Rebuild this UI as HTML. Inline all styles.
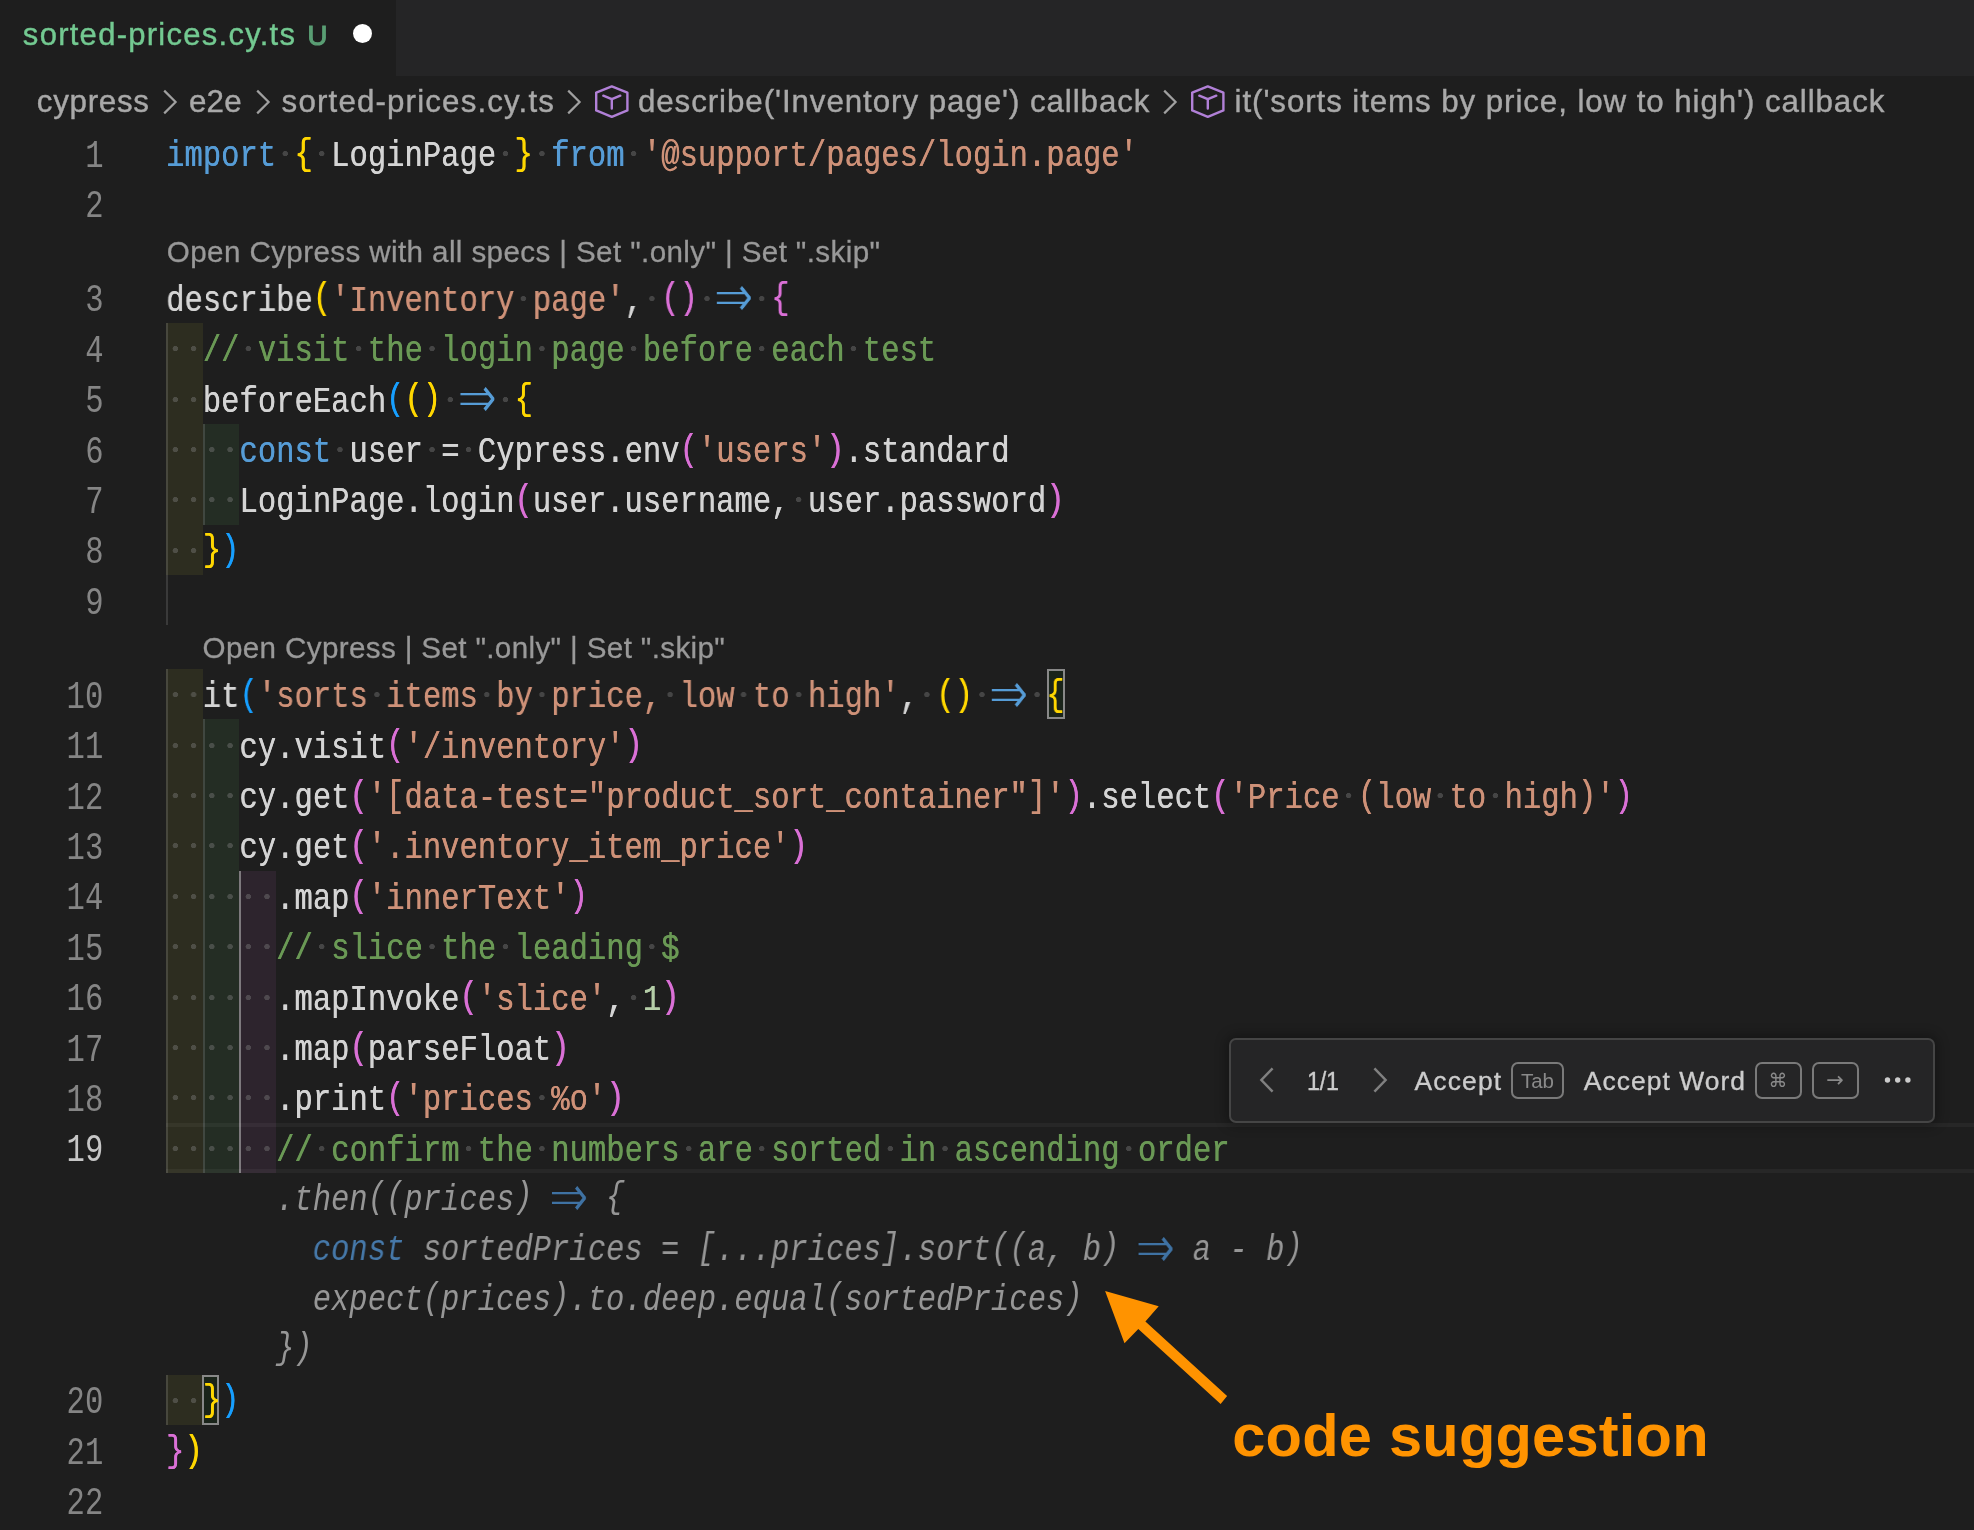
<!DOCTYPE html>
<html lang="en">
<head>
<meta charset="utf-8">
<title>sorted-prices.cy.ts</title>
<style>
html,body{margin:0;padding:0;}
body{width:1974px;height:1530px;background:#1e1e1e;position:relative;overflow:hidden;font-family:"Liberation Sans",sans-serif;color:#d4d4d4;}
#root{position:absolute;left:0;top:0;width:1974px;height:1530px;overflow:hidden;will-change:transform;}
.abs{position:absolute;}
.tabbar{position:absolute;left:0;top:0;width:1974px;height:76px;background:#252526;}
.tab{position:absolute;left:0;top:0;width:396px;height:76px;background:#1e1e1e;}
.tab .name{position:absolute;top:0;line-height:70px;font-size:31px;color:#73c991;white-space:pre;-webkit-text-stroke:0.4px #73c991;}
.tab .u{position:absolute;left:307.6px;top:0;line-height:71.6px;font-size:27.6px;color:#5a9e74;white-space:pre;-webkit-text-stroke:1.1px #5a9e74;}
.tab .dot{position:absolute;left:352.6px;top:24.2px;width:19.2px;height:19.2px;border-radius:50%;background:#ffffff;}
.bc{position:absolute;top:76px;height:52px;line-height:52px;font-size:31.3px;color:#a9a9a9;white-space:pre;-webkit-text-stroke:0.4px #a9a9a9;}
.chev{position:absolute;}
.ln{position:absolute;left:0;width:103.6px;text-align:right;height:50.4px;color:#858585;}
.ln.act{color:#c6c6c6;}
.code{position:absolute;left:166.0px;height:50.4px;white-space:pre;}
.mono{display:inline-block;font-family:"Liberation Mono","DejaVu Sans Mono",monospace;font-size:36.0px;line-height:50.4px;transform:scaleX(0.84863);transform-origin:0 0;white-space:pre;position:relative;top:4.12px;text-shadow:0.4px 0 0 currentColor;}
.ln .mono{transform-origin:100% 0;font-size:39.4px;transform:scaleX(0.77539);top:3.72px;text-shadow:none;}
.k{color:#569cd6;} .s{color:#ce9178;} .c{color:#6a9955;} .n{color:#b5cea8;} .f{color:#d4d4d4;}
.b1{color:#ffd700;} .b2{color:#da70d6;} .b3{color:#179fff;}
.ar{display:inline-block;width:43.21px;height:1px;position:relative;vertical-align:baseline;}
.ar b{position:absolute;left:-2.2px;top:-39.6px;width:100%;text-align:center;font:normal 400 54px/54px "DejaVu Sans",sans-serif;color:#569cd6;transform:scale(1.04,1.12);-webkit-text-stroke:1.1px #1e1e1e;text-shadow:none;}
.ga b{color:#3f72a3;margin-top:1.3px;}
i.w{font-style:normal;background:radial-gradient(ellipse 3.6px 2.9px at 50% calc(50% - 2.9px), rgba(140,140,140,0.36) 0, rgba(140,140,140,0.36) 80%, rgba(140,140,140,0) 100%);}
.bmbox{position:absolute;box-sizing:border-box;border:2px solid #888888;background:rgba(0,100,0,0.1);}
.b1,.b2,.b3,.p{position:relative;top:-2.4px;}
.gh .mono{margin-top:-1.5px;text-shadow:none;}
.g{color:#969696;font-style:italic;} .gk{color:#4678a8;font-style:italic;} .ga{color:#4678a8;}
.lens{position:absolute;font-size:29.6px;color:#999999;-webkit-text-stroke:0.3px #999999;white-space:pre;height:43.6px;line-height:43.6px;}
.rb{position:absolute;height:50.4px;}
.guide{position:absolute;width:2px;}
.tb{position:absolute;left:1229px;top:1038px;width:706px;height:85px;box-sizing:border-box;border:2px solid #454545;border-radius:7px;background:#252526;box-shadow:0 0 12px 3px rgba(0,0,0,0.30);}
.tb .t{position:absolute;top:0;height:81px;line-height:82px;font-size:26.4px;color:#cccccc;white-space:pre;-webkit-text-stroke:0.35px #cccccc;}
.key{position:absolute;top:22px;height:37px;box-sizing:border-box;border:2px solid #7a7a7a;border-radius:7px;color:#8a8a8a;text-align:center;white-space:pre;}
.ann{position:absolute;top:1401.2px;font-weight:bold;font-size:59.6px;line-height:70px;color:#ff9300;white-space:pre;}
</style>
</head>
<body>
<div id="root">
<div class="tabbar"><div class="tab"><span class="name" style="left:22.86px;letter-spacing:1.270px">sorted-prices.cy.ts</span><span class="u">U</span><span class="dot"></span></div></div>
<div class="bc" id="bc0" style="left:36.86px;letter-spacing:0.720px">cypress</div>
<div class="bc" id="bc1" style="left:188.90px;letter-spacing:0.270px">e2e</div>
<div class="bc" id="bc2" style="left:281.62px;letter-spacing:1.150px">sorted-prices.cy.ts</div>
<div class="bc" id="bc3" style="left:637.90px;letter-spacing:0.932px">describe('Inventory page') callback</div>
<div class="bc" id="bc4" style="left:1234.62px;letter-spacing:0.915px">it('sorts items by price, low to high') callback</div>
<svg class="chev" style="left:160.0px;top:86px" width="22" height="32" viewBox="0 0 22 32"><path d="M4.2 4.6 L15.6 16 L4.2 27.4" fill="none" stroke="#a0a0a0" stroke-width="2.2" stroke-linejoin="miter"/></svg>
<svg class="chev" style="left:253.0px;top:86px" width="22" height="32" viewBox="0 0 22 32"><path d="M4.2 4.6 L15.6 16 L4.2 27.4" fill="none" stroke="#a0a0a0" stroke-width="2.2" stroke-linejoin="miter"/></svg>
<svg class="chev" style="left:564px;top:86px" width="22" height="32" viewBox="0 0 22 32"><path d="M4.2 4.6 L15.6 16 L4.2 27.4" fill="none" stroke="#a0a0a0" stroke-width="2.2" stroke-linejoin="miter"/></svg>
<svg class="chev" style="left:1159.5px;top:86px" width="22" height="32" viewBox="0 0 22 32"><path d="M4.2 4.6 L15.6 16 L4.2 27.4" fill="none" stroke="#a0a0a0" stroke-width="2.2" stroke-linejoin="miter"/></svg>
<svg class="chev" style="left:592px;top:82px" width="40" height="40" viewBox="0 0 40 40"><path d="M19.8 4.4 L35.4 10.6 L35.4 28.4 L19.8 34.8 L4.2 28.4 L4.2 10.6 Z" fill="none" stroke="#b180d7" stroke-width="2.4" stroke-linejoin="round"/><path d="M11.3 13.7 L19.8 17.2 L28.3 13.7 M19.8 17.2 L19.8 26.6" fill="none" stroke="#b180d7" stroke-width="2.4" stroke-linecap="round"/></svg>
<svg class="chev" style="left:1187.5px;top:82px" width="40" height="40" viewBox="0 0 40 40"><path d="M19.8 4.4 L35.4 10.6 L35.4 28.4 L19.8 34.8 L4.2 28.4 L4.2 10.6 Z" fill="none" stroke="#b180d7" stroke-width="2.4" stroke-linejoin="round"/><path d="M11.3 13.7 L19.8 17.2 L28.3 13.7 M19.8 17.2 L19.8 26.6" fill="none" stroke="#b180d7" stroke-width="2.4" stroke-linecap="round"/></svg>
<div class="rb" style="left:166.0px;top:323.0px;width:36.7px;background:rgba(255,255,64,0.07)"></div><div class="rb" style="left:166.0px;top:373.4px;width:36.7px;background:rgba(255,255,64,0.07)"></div><div class="rb" style="left:166.0px;top:423.8px;width:36.7px;background:rgba(255,255,64,0.07)"></div><div class="rb" style="left:202.7px;top:423.8px;width:36.7px;background:rgba(127,255,127,0.07)"></div><div class="rb" style="left:166.0px;top:474.2px;width:36.7px;background:rgba(255,255,64,0.07)"></div><div class="rb" style="left:202.7px;top:474.2px;width:36.7px;background:rgba(127,255,127,0.07)"></div><div class="rb" style="left:166.0px;top:524.6px;width:36.7px;background:rgba(255,255,64,0.07)"></div><div class="rb" style="left:166.0px;top:669.0px;width:36.7px;background:rgba(255,255,64,0.07)"></div><div class="rb" style="left:166.0px;top:719.4px;width:36.7px;background:rgba(255,255,64,0.07)"></div><div class="rb" style="left:202.7px;top:719.4px;width:36.7px;background:rgba(127,255,127,0.07)"></div><div class="rb" style="left:166.0px;top:769.8px;width:36.7px;background:rgba(255,255,64,0.07)"></div><div class="rb" style="left:202.7px;top:769.8px;width:36.7px;background:rgba(127,255,127,0.07)"></div><div class="rb" style="left:166.0px;top:820.2px;width:36.7px;background:rgba(255,255,64,0.07)"></div><div class="rb" style="left:202.7px;top:820.2px;width:36.7px;background:rgba(127,255,127,0.07)"></div><div class="rb" style="left:166.0px;top:870.6px;width:36.7px;background:rgba(255,255,64,0.07)"></div><div class="rb" style="left:202.7px;top:870.6px;width:36.7px;background:rgba(127,255,127,0.07)"></div><div class="rb" style="left:239.3px;top:870.6px;width:36.7px;background:rgba(255,127,255,0.07)"></div><div class="rb" style="left:166.0px;top:921.0px;width:36.7px;background:rgba(255,255,64,0.07)"></div><div class="rb" style="left:202.7px;top:921.0px;width:36.7px;background:rgba(127,255,127,0.07)"></div><div class="rb" style="left:239.3px;top:921.0px;width:36.7px;background:rgba(255,127,255,0.07)"></div><div class="rb" style="left:166.0px;top:971.4px;width:36.7px;background:rgba(255,255,64,0.07)"></div><div class="rb" style="left:202.7px;top:971.4px;width:36.7px;background:rgba(127,255,127,0.07)"></div><div class="rb" style="left:239.3px;top:971.4px;width:36.7px;background:rgba(255,127,255,0.07)"></div><div class="rb" style="left:166.0px;top:1021.8px;width:36.7px;background:rgba(255,255,64,0.07)"></div><div class="rb" style="left:202.7px;top:1021.8px;width:36.7px;background:rgba(127,255,127,0.07)"></div><div class="rb" style="left:239.3px;top:1021.8px;width:36.7px;background:rgba(255,127,255,0.07)"></div><div class="rb" style="left:166.0px;top:1072.2px;width:36.7px;background:rgba(255,255,64,0.07)"></div><div class="rb" style="left:202.7px;top:1072.2px;width:36.7px;background:rgba(127,255,127,0.07)"></div><div class="rb" style="left:239.3px;top:1072.2px;width:36.7px;background:rgba(255,127,255,0.07)"></div><div class="rb" style="left:166.0px;top:1122.6px;width:36.7px;background:rgba(255,255,64,0.07)"></div><div class="rb" style="left:202.7px;top:1122.6px;width:36.7px;background:rgba(127,255,127,0.07)"></div><div class="rb" style="left:239.3px;top:1122.6px;width:36.7px;background:rgba(255,127,255,0.07)"></div><div class="rb" style="left:166.0px;top:1374.6px;width:36.7px;background:rgba(255,255,64,0.07)"></div>
<div class="guide" style="left:166.0px;top:323.0px;height:302.4px;background:rgba(200,200,200,0.17)"></div><div class="guide" style="left:166.0px;top:669.0px;height:504.0px;background:rgba(200,200,200,0.17)"></div><div class="guide" style="left:166.0px;top:1374.6px;height:50.4px;background:rgba(200,200,200,0.17)"></div><div class="guide" style="left:202.7px;top:423.8px;height:100.8px;background:rgba(200,200,200,0.17)"></div><div class="guide" style="left:202.7px;top:719.4px;height:453.6px;background:rgba(200,200,200,0.17)"></div><div class="guide" style="left:239.3px;top:870.6px;height:302.4px;background:rgba(200,200,200,0.52)"></div>
<div class="bmbox" style="left:1047.0px;top:669.0px;width:17.5px;height:50.4px"></div><div class="bmbox" style="left:201.9px;top:1374.6px;width:17.5px;height:50.4px"></div>
<div class="abs" style="left:166.0px;top:1123.0px;width:1808.0px;height:49.8px;box-sizing:border-box;border-top:4px solid rgba(255,255,255,0.045);border-bottom:4px solid rgba(255,255,255,0.045);"></div>
<div class="ln" style="top:128.2px"><span class="mono">1</span></div><div class="code" style="top:128.2px"><span class="mono"><span class="k">import</span><i class="w"> </i><span class="b1">{</span><i class="w"> </i><span class="f">LoginPage</span><i class="w"> </i><span class="b1">}</span><i class="w"> </i><span class="k">from</span><i class="w"> </i><span class="s">'@support/pages/login.page'</span></span></div>
<div class="ln" style="top:178.6px"><span class="mono">2</span></div>
<div class="lens" style="left:166.86px;letter-spacing:0.387px;top:229.6px">Open Cypress with all specs | Set ".only" | Set ".skip"</div>
<div class="ln" style="top:272.6px"><span class="mono">3</span></div><div class="code" style="top:272.6px"><span class="mono"><span class="f">describe</span><span class="b1">(</span><span class="s">'Inventory<i class="w"> </i>page'</span><span class="f">,</span><i class="w"> </i><span class="b2">()</span><i class="w"> </i><span class="ar a"><b>⇒</b></span><i class="w"> </i><span class="b2">{</span></span></div>
<div class="ln" style="top:323.0px"><span class="mono">4</span></div><div class="code" style="top:323.0px"><span class="mono"><i class="w"> </i><i class="w"> </i><span class="c">//<i class="w"> </i>visit<i class="w"> </i>the<i class="w"> </i>login<i class="w"> </i>page<i class="w"> </i>before<i class="w"> </i>each<i class="w"> </i>test</span></span></div>
<div class="ln" style="top:373.4px"><span class="mono">5</span></div><div class="code" style="top:373.4px"><span class="mono"><i class="w"> </i><i class="w"> </i><span class="f">beforeEach</span><span class="b3">(</span><span class="b1">()</span><i class="w"> </i><span class="ar a"><b>⇒</b></span><i class="w"> </i><span class="b1">{</span></span></div>
<div class="ln" style="top:423.8px"><span class="mono">6</span></div><div class="code" style="top:423.8px"><span class="mono"><i class="w"> </i><i class="w"> </i><i class="w"> </i><i class="w"> </i><span class="k">const</span><i class="w"> </i><span class="f">user</span><i class="w"> </i><span class="f">=</span><i class="w"> </i><span class="f">Cypress.env</span><span class="b2">(</span><span class="s">'users'</span><span class="b2">)</span><span class="f">.standard</span></span></div>
<div class="ln" style="top:474.2px"><span class="mono">7</span></div><div class="code" style="top:474.2px"><span class="mono"><i class="w"> </i><i class="w"> </i><i class="w"> </i><i class="w"> </i><span class="f">LoginPage.login</span><span class="b2">(</span><span class="f">user.username,</span><i class="w"> </i><span class="f">user.password</span><span class="b2">)</span></span></div>
<div class="ln" style="top:524.6px"><span class="mono">8</span></div><div class="code" style="top:524.6px"><span class="mono"><i class="w"> </i><i class="w"> </i><span class="b1">}</span><span class="b3">)</span></span></div>
<div class="ln" style="top:575.0px"><span class="mono">9</span></div>
<div class="lens" style="left:202.56px;letter-spacing:0.365px;top:626.0px">Open Cypress | Set ".only" | Set ".skip"</div>
<div class="ln" style="top:669.0px"><span class="mono">10</span></div><div class="code" style="top:669.0px"><span class="mono"><i class="w"> </i><i class="w"> </i><span class="f">it</span><span class="b3">(</span><span class="s">'sorts<i class="w"> </i>items<i class="w"> </i>by<i class="w"> </i>price,<i class="w"> </i>low<i class="w"> </i>to<i class="w"> </i>high'</span><span class="f">,</span><i class="w"> </i><span class="b1">()</span><i class="w"> </i><span class="ar a"><b>⇒</b></span><i class="w"> </i><span class="b1">{</span></span></div>
<div class="ln" style="top:719.4px"><span class="mono">11</span></div><div class="code" style="top:719.4px"><span class="mono"><i class="w"> </i><i class="w"> </i><i class="w"> </i><i class="w"> </i><span class="f">cy.visit</span><span class="b2">(</span><span class="s">'/inventory'</span><span class="b2">)</span></span></div>
<div class="ln" style="top:769.8px"><span class="mono">12</span></div><div class="code" style="top:769.8px"><span class="mono"><i class="w"> </i><i class="w"> </i><i class="w"> </i><i class="w"> </i><span class="f">cy.get</span><span class="b2">(</span><span class="s">'<span class="p">[</span>data-test="product_sort_container"<span class="p">]</span>'</span><span class="b2">)</span><span class="f">.select</span><span class="b2">(</span><span class="s">'Price<i class="w"> </i><span class="p">(</span>low<i class="w"> </i>to<i class="w"> </i>high<span class="p">)</span>'</span><span class="b2">)</span></span></div>
<div class="ln" style="top:820.2px"><span class="mono">13</span></div><div class="code" style="top:820.2px"><span class="mono"><i class="w"> </i><i class="w"> </i><i class="w"> </i><i class="w"> </i><span class="f">cy.get</span><span class="b2">(</span><span class="s">'.inventory_item_price'</span><span class="b2">)</span></span></div>
<div class="ln" style="top:870.6px"><span class="mono">14</span></div><div class="code" style="top:870.6px"><span class="mono"><i class="w"> </i><i class="w"> </i><i class="w"> </i><i class="w"> </i><i class="w"> </i><i class="w"> </i><span class="f">.map</span><span class="b2">(</span><span class="s">'innerText'</span><span class="b2">)</span></span></div>
<div class="ln" style="top:921.0px"><span class="mono">15</span></div><div class="code" style="top:921.0px"><span class="mono"><i class="w"> </i><i class="w"> </i><i class="w"> </i><i class="w"> </i><i class="w"> </i><i class="w"> </i><span class="c">//<i class="w"> </i>slice<i class="w"> </i>the<i class="w"> </i>leading<i class="w"> </i>$</span></span></div>
<div class="ln" style="top:971.4px"><span class="mono">16</span></div><div class="code" style="top:971.4px"><span class="mono"><i class="w"> </i><i class="w"> </i><i class="w"> </i><i class="w"> </i><i class="w"> </i><i class="w"> </i><span class="f">.mapInvoke</span><span class="b2">(</span><span class="s">'slice'</span><span class="f">,</span><i class="w"> </i><span class="n">1</span><span class="b2">)</span></span></div>
<div class="ln" style="top:1021.8px"><span class="mono">17</span></div><div class="code" style="top:1021.8px"><span class="mono"><i class="w"> </i><i class="w"> </i><i class="w"> </i><i class="w"> </i><i class="w"> </i><i class="w"> </i><span class="f">.map</span><span class="b2">(</span><span class="f">parseFloat</span><span class="b2">)</span></span></div>
<div class="ln" style="top:1072.2px"><span class="mono">18</span></div><div class="code" style="top:1072.2px"><span class="mono"><i class="w"> </i><i class="w"> </i><i class="w"> </i><i class="w"> </i><i class="w"> </i><i class="w"> </i><span class="f">.print</span><span class="b2">(</span><span class="s">'prices<i class="w"> </i>%o'</span><span class="b2">)</span></span></div>
<div class="ln act" style="top:1122.6px"><span class="mono">19</span></div><div class="code" style="top:1122.6px"><span class="mono"><i class="w"> </i><i class="w"> </i><i class="w"> </i><i class="w"> </i><i class="w"> </i><i class="w"> </i><span class="c">//<i class="w"> </i>confirm<i class="w"> </i>the<i class="w"> </i>numbers<i class="w"> </i>are<i class="w"> </i>sorted<i class="w"> </i>in<i class="w"> </i>ascending<i class="w"> </i>order</span></span></div>
<div class="code gh" style="top:1173.0px"><span class="mono"><span class="g">      .then<span class="p">(</span><span class="p">(</span>prices<span class="p">)</span> </span><span class="ar ga"><b>⇒</b></span><span class="g"> <span class="p">{</span></span></span></div>
<div class="code gh" style="top:1223.4px"><span class="mono"><span class="g">        </span><span class="gk">const</span><span class="g"> sortedPrices = <span class="p">[</span>...prices<span class="p">]</span>.sort<span class="p">(</span><span class="p">(</span>a, b<span class="p">)</span> </span><span class="ar ga"><b>⇒</b></span><span class="g"> a - b<span class="p">)</span></span></span></div>
<div class="code gh" style="top:1273.8px"><span class="mono"><span class="g">        expect<span class="p">(</span>prices<span class="p">)</span>.to.deep.equal<span class="p">(</span>sortedPrices<span class="p">)</span></span></span></div>
<div class="code gh" style="top:1324.2px"><span class="mono"><span class="g">      <span class="p">}</span><span class="p">)</span></span></span></div>
<div class="ln" style="top:1374.6px"><span class="mono">20</span></div><div class="code" style="top:1374.6px"><span class="mono"><i class="w"> </i><i class="w"> </i><span class="b1">}</span><span class="b3">)</span></span></div>
<div class="ln" style="top:1425.0px"><span class="mono">21</span></div><div class="code" style="top:1425.0px"><span class="mono"><span class="b2">}</span><span class="b1">)</span></span></div>
<div class="ln" style="top:1475.4px"><span class="mono">22</span></div>
<div class="tb">
<svg class="abs" style="left:24px;top:24px" width="24" height="34" viewBox="0 0 24 34"><path d="M17.6 4.4 L6.4 16 L17.6 27.6" fill="none" stroke="#808080" stroke-width="2.5"/></svg>
<span class="t" style="left:75.8px;letter-spacing:-0.3px;display:inline-block;transform:scaleX(0.885);transform-origin:0 0">1/1</span>
<svg class="abs" style="left:138px;top:24px" width="24" height="34" viewBox="0 0 24 34"><path d="M5.4 4.4 L16.6 16 L5.4 27.6" fill="none" stroke="#808080" stroke-width="2.5"/></svg>
<span class="t" style="left:183.50px;letter-spacing:1.188px">Accept</span>
<span class="key" style="left:280px;width:53px;font-size:20.5px;line-height:34px">Tab</span>
<span class="t" style="left:352.82px;letter-spacing:1.062px">Accept Word</span>
<span class="key" style="left:523.6px;width:47px;font-family:'DejaVu Sans',sans-serif;font-size:19px;line-height:33px">⌘</span>
<span class="key" style="left:580.6px;width:47px;font-family:'DejaVu Sans',sans-serif;font-size:21px;line-height:33px">→</span>
<svg class="abs" style="left:650px;top:30px" width="36" height="20" viewBox="0 0 36 20"><circle cx="6.5" cy="10" r="2.7" fill="#cccccc"/><circle cx="16.7" cy="10" r="2.7" fill="#cccccc"/><circle cx="26.9" cy="10" r="2.7" fill="#cccccc"/></svg>
</div>
<svg class="abs" style="left:1080px;top:1270px" width="300" height="200" viewBox="1080 1270 300 200">
<path d="M1105.1 1291 L1158.7 1306.2 L1145.4 1321.6 L1227.1 1396.1 L1220.6 1404 L1138.3 1328.9 L1124.5 1343.3 Z" fill="#ff9300"/>
</svg>
<div class="ann" style="left:1232.26px;letter-spacing:0.206px">code suggestion</div>
</div>
</body>
</html>
